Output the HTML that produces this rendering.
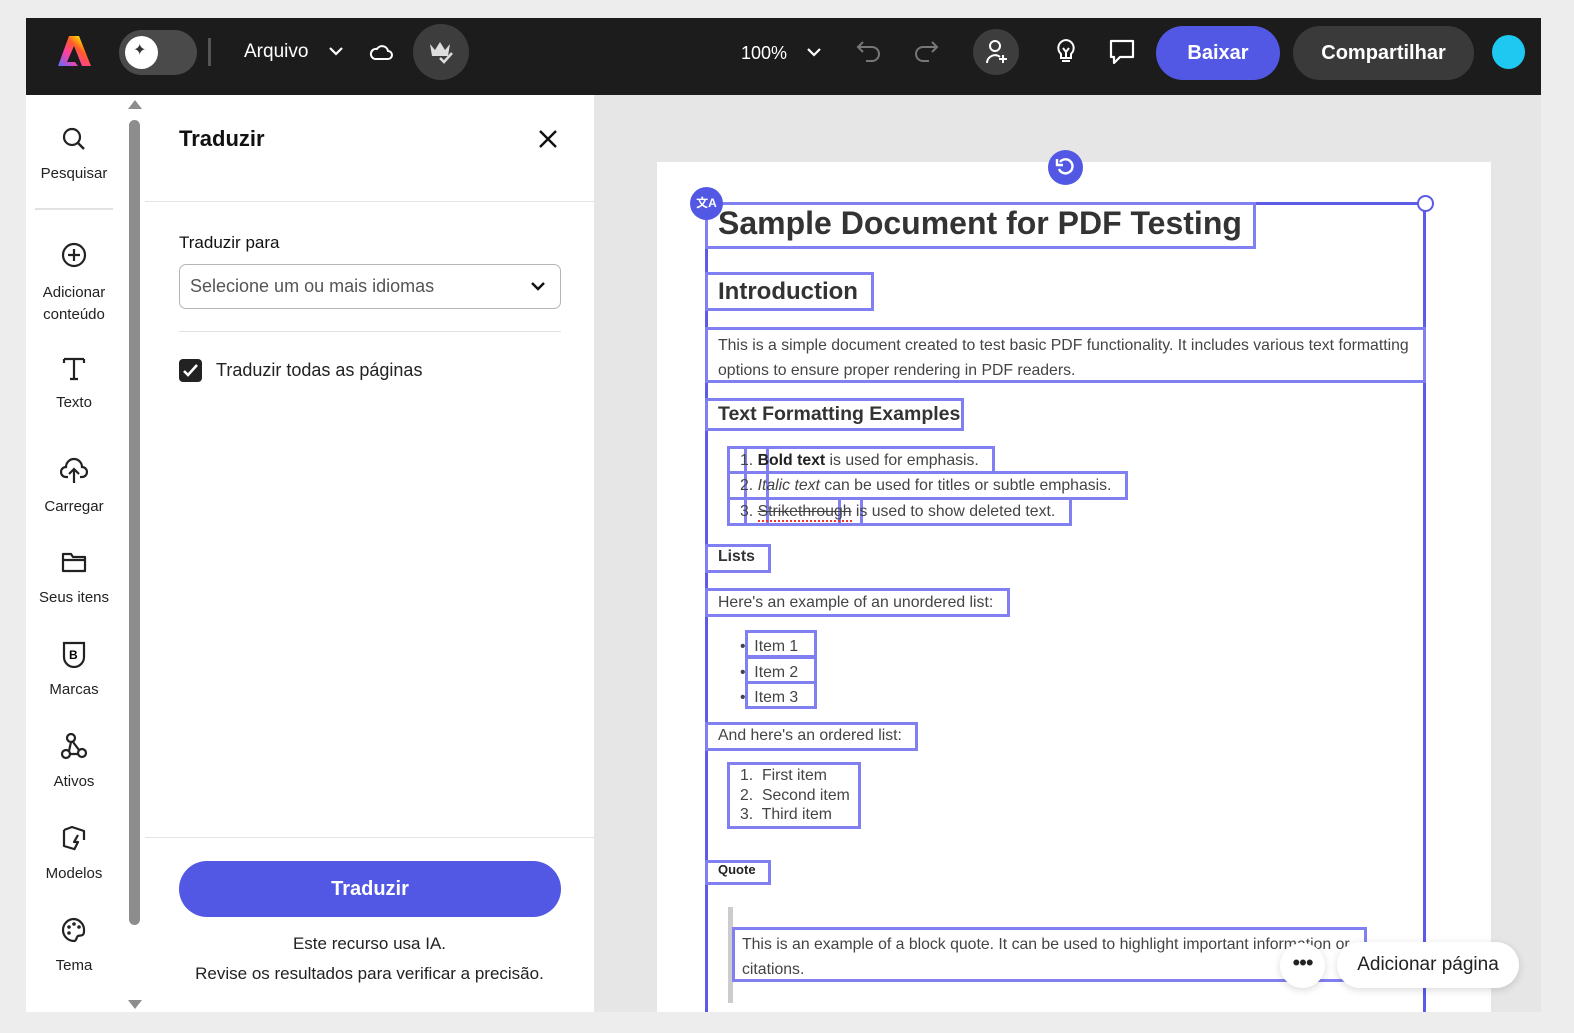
<!DOCTYPE html>
<html><head><meta charset="utf-8"><style>
*{box-sizing:border-box;margin:0;padding:0}
body{width:1574px;height:1033px;background:#ededed;position:relative;overflow:hidden;font-family:"Liberation Sans",sans-serif}
.a{position:absolute}
.top{left:26px;top:18px;width:1515px;height:77px;background:#1c1c1c}
.w{color:#fff;font-size:19px}
.side{left:26px;top:95px;width:119px;height:917px;background:#fff}
.si{position:absolute;left:0;width:96px;text-align:center;font-size:15px;color:#222}
.si svg{display:block;margin:0 auto 13px}
.panel{left:145px;top:95px;width:449px;height:917px;background:#fff}
.canvas{left:594px;top:95px;width:947px;height:917px;background:#e6e6e6}
.page{left:657px;top:162px;width:834px;height:850px;background:#fff}
.b{position:absolute;border:3px solid #8080f2;}
.t{position:absolute;color:#444;font-size:15.8px;white-space:nowrap}
</style></head><body>
<div class="a top"></div>
<svg class="a" style="left:56px;top:34px" width="36" height="34" viewBox="0 0 36 34"><defs><linearGradient id="g" x1="0" y1="1" x2="1" y2="0"><stop offset="0" stop-color="#5b6cff"/><stop offset=".35" stop-color="#ff3fa4"/><stop offset=".6" stop-color="#ff5a2a"/><stop offset=".8" stop-color="#ffd400"/><stop offset="1" stop-color="#2fd35a"/></linearGradient></defs><path d="M13 2h10l12 30h-9l-8-20-7 16h8l3 4H2z" fill="url(#g)"/></svg>
<div class="a" style="left:119px;top:30px;width:78px;height:45px;border-radius:23px;background:#4a4a4a"></div>
<div class="a" style="left:125px;top:36px;width:33px;height:33px;border-radius:50%;background:#fff"></div>
<div class="a" style="left:133px;top:40px;font-size:16px;color:#333">✦</div>
<div class="a" style="left:208px;top:38px;width:3px;height:28px;background:#555"></div>
<div class="a w" style="left:244px;top:41px">Arquivo</div>
<svg class="a" style="left:328px;top:46px" width="16" height="10"><path d="M2 2l6 6 6-6" stroke="#fff" stroke-width="2.2" fill="none"/></svg>
<svg class="a" style="left:368px;top:42px" width="26" height="20"><path d="M7 17h13a4 4 0 0 0 0-8 6 6 0 0 0-11-2 5 5 0 0 0-2 10z" stroke="#fff" stroke-width="2" fill="none"/></svg>
<div class="a" style="left:413px;top:24px;width:56px;height:56px;border-radius:50%;background:#3d3d3d"></div>
<svg class="a" style="left:428px;top:40px" width="28" height="26"><path d="M2 4l5 6 5-8 5 8 5-6-2 12H4z" fill="#ddd"/><path d="M12 18l4 4 8-9" stroke="#ddd" stroke-width="2.5" fill="none"/></svg>
<div class="a w" style="left:741px;top:43px;font-size:18px">100%</div>
<svg class="a" style="left:806px;top:47px" width="16" height="10"><path d="M2 2l6 6 6-6" stroke="#fff" stroke-width="2.2" fill="none"/></svg>
<svg class="a" style="left:855px;top:38px" width="30" height="28"><path d="M8 4L3 9l5 5M3 9h14a7 7 0 0 1 0 14h-6" stroke="#777" stroke-width="2" fill="none"/></svg>
<svg class="a" style="left:910px;top:38px" width="30" height="28"><path d="M22 4l5 5-5 5M27 9H13a7 7 0 0 0 0 14h6" stroke="#777" stroke-width="2" fill="none"/></svg>
<div class="a" style="left:973px;top:29px;width:46px;height:46px;border-radius:50%;background:#3d3d3d"></div>
<svg class="a" style="left:984px;top:39px" width="26" height="28"><circle cx="11" cy="7" r="5" stroke="#fff" stroke-width="2" fill="none"/><path d="M3 24a8 8 0 0 1 13-6M19 16v8M15 20h8" stroke="#fff" stroke-width="2" fill="none"/></svg>
<svg class="a" style="left:1055px;top:38px" width="22" height="28"><path d="M11 2a8 8 0 0 0-5 14v4h10v-4a8 8 0 0 0-5-14zM7 23h8M8 10l3 4 3-4M11 14v6" stroke="#fff" stroke-width="2" fill="none"/></svg>
<svg class="a" style="left:1108px;top:38px" width="28" height="28"><path d="M3 3h22v16H12l-6 6v-6H3z" stroke="#fff" stroke-width="2.2" fill="none" stroke-linejoin="round"/></svg>
<div class="a" style="left:1156px;top:26px;width:124px;height:54px;border-radius:27px;background:#5258e4;color:#fff;font-size:20px;font-weight:bold;text-align:center;line-height:54px">Baixar</div>
<div class="a" style="left:1293px;top:26px;width:181px;height:54px;border-radius:27px;background:#3a3a3a;color:#fff;font-size:20px;font-weight:bold;text-align:center;line-height:54px">Compartilhar</div>
<div class="a" style="left:1492px;top:35px;width:33px;height:34px;border-radius:50%;background:#1ec8f0"></div>

<div class="a side"></div>
<div class="a" style="left:35px;top:208px;width:78px;height:2px;background:#e2e2e2"></div>
<div class="a" style="left:129px;top:120px;width:11px;height:805px;border-radius:6px;background:#8d8d8d"></div>
<div class="a" style="left:128px;top:100px;width:0;height:0;border:7px solid transparent;border-bottom:9px solid #8d8d8d;border-top:0"></div>
<div class="a" style="left:128px;top:1000px;width:0;height:0;border:7px solid transparent;border-top:9px solid #8d8d8d;border-bottom:0"></div>
<div class="si" style="left:26px;top:126px"><svg width="26" height="26"><circle cx="11" cy="11" r="8" stroke="#222" stroke-width="2.2" fill="none"/><path d="M17 17l6 6" stroke="#222" stroke-width="2.4"/></svg>Pesquisar</div>
<div class="si" style="left:26px;top:241px;line-height:22px"><svg width="28" height="28"><circle cx="14" cy="14" r="11" stroke="#222" stroke-width="2.2" fill="none"/><path d="M14 8v12M8 14h12" stroke="#222" stroke-width="2.2"/></svg>Adicionar<br>conteúdo</div>
<div class="si" style="left:26px;top:355px"><svg width="26" height="26"><path d="M3 4h20M13 4v20M9 24h8M3 4v4M23 4v4" stroke="#222" stroke-width="2.2" fill="none"/></svg>Texto</div>
<div class="si" style="left:26px;top:457px"><svg width="28" height="28"><path d="M8 20H6a5 5 0 0 1 0-10 8 8 0 0 1 16 0 5 5 0 0 1 0 10h-2M14 26V13M9 17l5-5 5 5" stroke="#222" stroke-width="2.2" fill="none"/></svg>Carregar</div>
<div class="si" style="left:26px;top:548px"><svg width="28" height="28"><path d="M3 6h8l2 3h12v14H3z M3 12h22" stroke="#222" stroke-width="2.2" fill="none" stroke-linejoin="round"/></svg>Seus itens</div>
<div class="si" style="left:26px;top:640px"><svg width="28" height="28"><path d="M4 3h20v14a10 10 0 0 1-20 0z" stroke="#222" stroke-width="2.2" fill="none"/><text x="9" y="19" font-size="12" font-weight="bold" font-family="Liberation Sans">B</text></svg>Marcas</div>
<div class="si" style="left:26px;top:732px"><svg width="28" height="28"><circle cx="11" cy="6" r="4" stroke="#222" stroke-width="2.2" fill="none"/><circle cx="6" cy="22" r="4" stroke="#222" stroke-width="2.2" fill="none"/><circle cx="22" cy="21" r="4" stroke="#222" stroke-width="2.2" fill="none"/><path d="M10 22h8M9 19l2-9M13 10l6 8" stroke="#222" stroke-width="2.2"/></svg>Ativos</div>
<div class="si" style="left:26px;top:824px"><svg width="28" height="28"><path d="M4 6l8-3 12 4v9M4 6v16l10 3M14 26l4-8h-4l4-7" stroke="#222" stroke-width="2.2" fill="none" stroke-linejoin="round"/></svg>Modelos</div>
<div class="si" style="left:26px;top:916px"><svg width="28" height="28"><path d="M14 3a11 11 0 1 0 0 22c3 0 2-4 4-5s6 1 6-5A11 11 0 0 0 14 3z" stroke="#222" stroke-width="2.2" fill="none"/><circle cx="9" cy="11" r="1.8" fill="#222"/><circle cx="14" cy="8" r="1.8" fill="#222"/><circle cx="9" cy="17" r="1.8" fill="#222"/><circle cx="19" cy="11" r="1.8" fill="#222"/></svg>Tema</div>

<div class="a panel"></div>
<div class="a" style="left:179px;top:126px;font-size:22px;font-weight:bold;color:#111">Traduzir</div>
<svg class="a" style="left:538px;top:129px" width="20" height="20"><path d="M2 2l16 16M18 2L2 18" stroke="#111" stroke-width="2.4"/></svg>
<div class="a" style="left:145px;top:201px;width:449px;height:1px;background:#e4e4e4"></div>
<div class="a" style="left:179px;top:233px;font-size:17px;color:#111">Traduzir para</div>
<div class="a" style="left:179px;top:264px;width:382px;height:45px;border:1px solid #b5b5b5;border-radius:7px"></div>
<div class="a" style="left:190px;top:276px;font-size:18px;color:#555">Selecione um ou mais idiomas</div>
<svg class="a" style="left:530px;top:280px" width="16" height="12"><path d="M2 3l6 6 6-6" stroke="#111" stroke-width="2.4" fill="none"/></svg>
<div class="a" style="left:179px;top:331px;width:382px;height:1px;background:#e0e0e0"></div>
<div class="a" style="left:179px;top:359px;width:23px;height:23px;border-radius:4px;background:#222"></div>
<svg class="a" style="left:182px;top:363px" width="17" height="15"><path d="M2 8l4 4 9-10" stroke="#fff" stroke-width="2.6" fill="none"/></svg>
<div class="a" style="left:216px;top:360px;font-size:18px;color:#222">Traduzir todas as páginas</div>
<div class="a" style="left:145px;top:837px;width:449px;height:1px;background:#e4e4e4"></div>
<div class="a" style="left:179px;top:861px;width:382px;height:56px;border-radius:28px;background:#5258e4;color:#fff;font-size:20px;font-weight:bold;text-align:center;line-height:56px">Traduzir</div>
<div class="a" style="left:145px;top:929px;width:449px;text-align:center;font-size:17px;color:#222;line-height:30px">Este recurso usa IA.<br>Revise os resultados para verificar a precisão.</div>

<div class="a canvas"></div>
<div class="a page"></div>
<div class="a" style="left:705px;top:202px;width:721px;height:810px;border:3px solid #5b5be8;border-bottom:none"></div>
<div class="b" style="left:705px;top:202px;width:551px;height:47px"></div>
<div class="t" style="left:718px;top:205px;font-size:32px;font-weight:bold;color:#333">Sample Document for PDF Testing</div>
<div class="b" style="left:705px;top:272px;width:169px;height:39px"></div>
<div class="t" style="left:718px;top:278px;font-size:24px;font-weight:bold;color:#333">Introduction</div>
<div class="b" style="left:705px;top:327px;width:721px;height:56px"></div>
<div class="t" style="left:718px;top:333px;line-height:25px">This is a simple document created to test basic PDF functionality. It includes various text formatting<br>options to ensure proper rendering in PDF readers.</div>
<div class="b" style="left:705px;top:398px;width:259px;height:33px"></div>
<div class="t" style="left:718px;top:403px;font-size:19.5px;font-weight:bold;color:#333">Text Formatting Examples</div>
<div class="b" style="left:727px;top:446px;width:268px;height:28px"></div>
<div class="b" style="left:727px;top:471px;width:401px;height:29px"></div>
<div class="b" style="left:727px;top:497px;width:345px;height:29px"></div>
<div class="b" style="left:744px;top:446px;width:25px;height:80px;border-width:0 3px"></div>
<div class="b" style="left:838px;top:497px;width:25px;height:29px;border-width:0 3px"></div>
<div class="t" style="left:740px;top:452px">1. <b style="color:#222">Bold text</b> is used for emphasis.</div>
<div class="t" style="left:740px;top:477px">2. <i>Italic text</i> can be used for titles or subtle emphasis.</div>
<div class="t" style="left:740px;top:503px">3. <span style="text-decoration:line-through;border-bottom:2px dotted #e33">Strikethrough</span> is used to show deleted text.</div>
<div class="b" style="left:705px;top:544px;width:66px;height:29px"></div>
<div class="t" style="left:718px;top:548px;font-weight:bold;color:#333">Lists</div>
<div class="b" style="left:705px;top:588px;width:305px;height:29px"></div>
<div class="t" style="left:718px;top:594px">Here's an example of an unordered list:</div>
<div class="b" style="left:745px;top:630px;width:72px;height:28px"></div>
<div class="b" style="left:745px;top:656px;width:72px;height:28px"></div>
<div class="b" style="left:745px;top:681px;width:72px;height:28px"></div>
<div class="t" style="left:740px;top:634px;line-height:25.5px">•&nbsp; Item 1<br>•&nbsp; Item 2<br>•&nbsp; Item 3</div>
<div class="b" style="left:705px;top:722px;width:213px;height:29px"></div>
<div class="t" style="left:718px;top:727px">And here's an ordered list:</div>
<div class="b" style="left:727px;top:762px;width:134px;height:67px"></div>
<div class="t" style="left:740px;top:766px;line-height:19.5px">1.&nbsp; First item<br>2.&nbsp; Second item<br>3.&nbsp; Third item</div>
<div class="b" style="left:705px;top:860px;width:66px;height:25px"></div>
<div class="t" style="left:718px;top:862px;font-size:13px;font-weight:bold;color:#222">Quote</div>
<div class="a" style="left:728px;top:907px;width:5px;height:96px;background:#ccc"></div>
<div class="b" style="left:732px;top:927px;width:635px;height:55px"></div>
<div class="t" style="left:742px;top:932px;line-height:25px">This is an example of a block quote. It can be used to highlight important information or<br>citations.</div>
<div class="a" style="left:690px;top:187px;width:33px;height:33px;border-radius:50%;background:#5258e4;color:#fff;font-size:12px;font-weight:bold;text-align:center;line-height:33px;font-family:'Liberation Sans','Noto Sans CJK SC',sans-serif">文A</div>
<div class="a" style="left:1048px;top:150px;width:35px;height:35px;border-radius:50%;background:#5258e4"></div>
<svg class="a" style="left:1054px;top:156px" width="23" height="23"><path d="M6 6a7 7 0 1 1-1 7" stroke="#fff" stroke-width="2.4" fill="none"/><path d="M3 3v6h6" stroke="#fff" stroke-width="2.4" fill="none"/></svg>
<div class="a" style="left:1417px;top:195px;width:17px;height:17px;border-radius:50%;background:#fff;border:2px solid #5b5be8"></div>
<div class="a" style="left:1280px;top:943px;width:45px;height:45px;border-radius:50%;background:#fff;box-shadow:0 2px 8px rgba(0,0,0,.15);text-align:center;line-height:40px;font-size:22px;color:#222;letter-spacing:-1px">•••</div>
<div class="a" style="left:1337px;top:942px;width:182px;height:46px;border-radius:23px;background:#fff;box-shadow:0 2px 8px rgba(0,0,0,.15);text-align:center;line-height:46px;font-size:19px;color:#222">Adicionar página</div>
</body></html>
